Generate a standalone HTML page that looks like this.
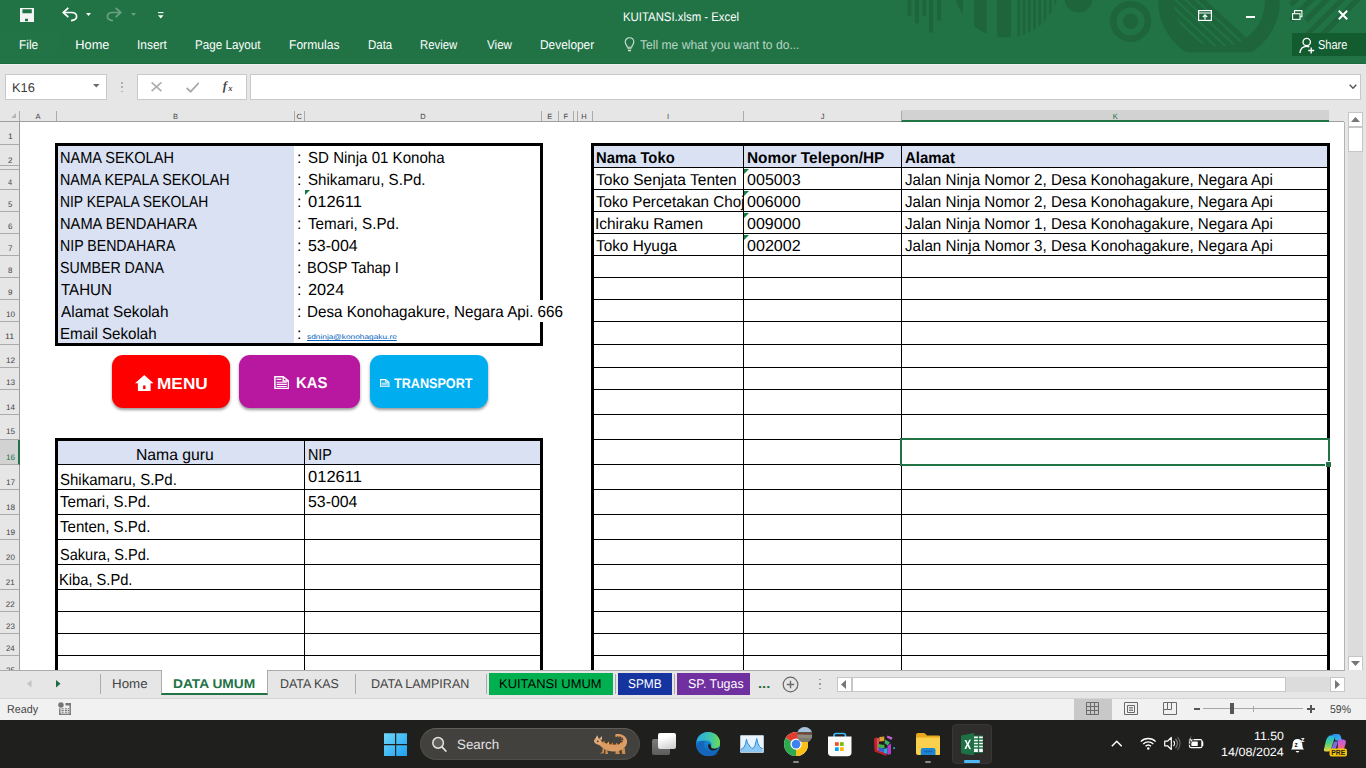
<!DOCTYPE html>
<html lang="id"><head><meta charset="utf-8"><title>KUITANSI.xlsm - Excel</title>
<style>
html,body{margin:0;padding:0;}
body{width:1366px;height:768px;overflow:hidden;background:#fff;font-family:"Liberation Sans",sans-serif;}
#root{position:relative;width:1366px;height:768px;overflow:hidden;background:#fff;}
#root div,#root span.t,#root svg{position:absolute;}
span.t{white-space:pre;display:block;text-rendering:geometricPrecision;transform-origin:0 0;}

</style></head>
<body>
<div id="root">
<div style="left:0px;top:64px;width:1366px;height:58px;background:#e6e6e6;"></div>
<div style="left:0px;top:122px;width:1366px;height:548px;background:#fff;"></div>
<div style="left:58px;top:146px;width:236px;height:197px;background:#d9e1f2;"></div>
<div style="left:58px;top:441px;width:482px;height:23px;background:#d9e1f2;"></div>
<div style="left:594px;top:146px;width:733px;height:21px;background:#d9e1f2;"></div>
<div style="left:594px;top:167px;width:733px;height:1px;background:#000;"></div>
<div style="left:594px;top:189px;width:733px;height:1px;background:#000;"></div>
<div style="left:594px;top:211px;width:733px;height:1px;background:#000;"></div>
<div style="left:594px;top:233px;width:733px;height:1px;background:#000;"></div>
<div style="left:594px;top:255px;width:733px;height:1px;background:#000;"></div>
<div style="left:594px;top:277px;width:733px;height:1px;background:#000;"></div>
<div style="left:594px;top:299px;width:733px;height:1px;background:#000;"></div>
<div style="left:594px;top:321px;width:733px;height:1px;background:#000;"></div>
<div style="left:594px;top:344px;width:733px;height:1px;background:#000;"></div>
<div style="left:594px;top:367px;width:733px;height:1px;background:#000;"></div>
<div style="left:594px;top:389px;width:733px;height:1px;background:#000;"></div>
<div style="left:594px;top:414px;width:733px;height:1px;background:#000;"></div>
<div style="left:594px;top:439px;width:733px;height:1px;background:#000;"></div>
<div style="left:594px;top:464px;width:733px;height:1px;background:#000;"></div>
<div style="left:594px;top:489px;width:733px;height:1px;background:#000;"></div>
<div style="left:594px;top:514px;width:733px;height:1px;background:#000;"></div>
<div style="left:594px;top:539px;width:733px;height:1px;background:#000;"></div>
<div style="left:594px;top:564px;width:733px;height:1px;background:#000;"></div>
<div style="left:594px;top:589px;width:733px;height:1px;background:#000;"></div>
<div style="left:594px;top:611px;width:733px;height:1px;background:#000;"></div>
<div style="left:594px;top:633px;width:733px;height:1px;background:#000;"></div>
<div style="left:594px;top:655px;width:733px;height:1px;background:#000;"></div>
<div style="left:743px;top:146px;width:1px;height:524px;background:#000;"></div>
<div style="left:901px;top:146px;width:1px;height:524px;background:#000;"></div>
<div style="left:591px;top:143px;width:739px;height:3px;background:#000;"></div>
<div style="left:591px;top:143px;width:3px;height:527px;background:#000;"></div>
<div style="left:1327px;top:143px;width:3px;height:527px;background:#000;"></div>
<div style="left:55px;top:143px;width:488px;height:3px;background:#000;"></div>
<div style="left:55px;top:143px;width:3px;height:203px;background:#000;"></div>
<div style="left:55px;top:343px;width:488px;height:3px;background:#000;"></div>
<div style="left:540px;top:143px;width:3px;height:157px;background:#000;"></div>
<div style="left:540px;top:322px;width:3px;height:24px;background:#000;"></div>
<div style="left:55px;top:438px;width:488px;height:3px;background:#000;"></div>
<div style="left:55px;top:438px;width:3px;height:232px;background:#000;"></div>
<div style="left:540px;top:438px;width:3px;height:232px;background:#000;"></div>
<div style="left:58px;top:464px;width:482px;height:1px;background:#000;"></div>
<div style="left:58px;top:489px;width:482px;height:1px;background:#000;"></div>
<div style="left:58px;top:514px;width:482px;height:1px;background:#000;"></div>
<div style="left:58px;top:539px;width:482px;height:1px;background:#000;"></div>
<div style="left:58px;top:564px;width:482px;height:1px;background:#000;"></div>
<div style="left:58px;top:589px;width:482px;height:1px;background:#000;"></div>
<div style="left:58px;top:611px;width:482px;height:1px;background:#000;"></div>
<div style="left:58px;top:633px;width:482px;height:1px;background:#000;"></div>
<div style="left:58px;top:655px;width:482px;height:1px;background:#000;"></div>
<div style="left:304px;top:441px;width:1px;height:229px;background:#000;"></div>
<span class="t" style="left:59.81px;top:151px;font-size:16px;line-height:16px;color:#000;transform:scaleX(0.9083);">NAMA SEKOLAH</span>
<span class="t" style="left:59.83px;top:173px;font-size:16px;line-height:16px;color:#000;transform:scaleX(0.8929);">NAMA KEPALA SEKOLAH</span>
<span class="t" style="left:59.86px;top:195px;font-size:16px;line-height:16px;color:#000;transform:scaleX(0.8667);">NIP KEPALA SEKOLAH</span>
<span class="t" style="left:59.80px;top:217px;font-size:16px;line-height:16px;color:#000;transform:scaleX(0.9167);">NAMA BENDAHARA</span>
<span class="t" style="left:59.84px;top:239px;font-size:16px;line-height:16px;color:#000;transform:scaleX(0.8844);">NIP BENDAHARA</span>
<span class="t" style="left:60.36px;top:261px;font-size:16px;line-height:16px;color:#000;transform:scaleX(0.8860);">SUMBER DANA</span>
<span class="t" style="left:60.66px;top:283px;font-size:16px;line-height:16px;color:#000;transform:scaleX(0.9434);">TAHUN</span>
<span class="t" style="left:60.97px;top:305px;font-size:16px;line-height:16px;color:#000;transform:scaleX(0.9586);">Alamat Sekolah</span>
<span class="t" style="left:59.76px;top:327px;font-size:16px;line-height:16px;color:#000;transform:scaleX(0.9447);">Email Sekolah</span>
<span class="t" style="left:296.94px;top:151px;font-size:16px;line-height:16px;color:#000;">:</span>
<span class="t" style="left:296.94px;top:173px;font-size:16px;line-height:16px;color:#000;">:</span>
<span class="t" style="left:296.94px;top:195px;font-size:16px;line-height:16px;color:#000;">:</span>
<span class="t" style="left:296.94px;top:217px;font-size:16px;line-height:16px;color:#000;">:</span>
<span class="t" style="left:296.94px;top:239px;font-size:16px;line-height:16px;color:#000;">:</span>
<span class="t" style="left:296.94px;top:261px;font-size:16px;line-height:16px;color:#000;">:</span>
<span class="t" style="left:296.94px;top:283px;font-size:16px;line-height:16px;color:#000;">:</span>
<span class="t" style="left:296.94px;top:305px;font-size:16px;line-height:16px;color:#000;">:</span>
<span class="t" style="left:296.94px;top:327px;font-size:16px;line-height:16px;color:#000;">:</span>
<span class="t" style="left:307.82px;top:151px;font-size:16px;line-height:16px;color:#000;transform:scaleX(0.9421);">SD Ninja 01 Konoha</span>
<span class="t" style="left:307.81px;top:173px;font-size:16px;line-height:16px;color:#000;transform:scaleX(0.9443);">Shikamaru, S.Pd.</span>
<span class="t" style="left:307.85px;top:195px;font-size:16px;line-height:16px;color:#000;transform:scaleX(1.0335);">012611</span>
<span class="t" style="left:308.16px;top:217px;font-size:16px;line-height:16px;color:#000;transform:scaleX(0.9500);">Temari, S.Pd.</span>
<span class="t" style="left:307.86px;top:239px;font-size:16px;line-height:16px;color:#000;transform:scaleX(0.9957);">53-004</span>
<span class="t" style="left:307.30px;top:261px;font-size:16px;line-height:16px;color:#000;transform:scaleX(0.9107);">BOSP Tahap I</span>
<span class="t" style="left:307.68px;top:283px;font-size:16px;line-height:16px;color:#000;transform:scaleX(1.0169);">2024</span>
<span class="t" style="left:307.25px;top:305px;font-size:16px;line-height:16px;color:#000;transform:scaleX(0.9497);">Desa Konohagakure, Negara Api. 666</span>
<span class="t" style="left:306.87px;top:335px;font-size:6.8px;line-height:6.8px;color:#0563c1;transform:scaleX(1.2233);text-decoration:underline;">sdninja@konohagaku.re</span>
<span class="t" style="left:595.81px;top:151px;font-size:15.8px;line-height:15.8px;color:#000;font-weight:700;transform:scaleX(0.9368);">Nama Toko</span>
<span class="t" style="left:746.57px;top:151px;font-size:15.8px;line-height:15.8px;color:#000;font-weight:700;transform:scaleX(0.9741);">Nomor Telepon/HP</span>
<span class="t" style="left:904.93px;top:151px;font-size:15.8px;line-height:15.8px;color:#000;font-weight:700;transform:scaleX(0.9465);">Alamat</span>
<span class="t" style="left:596.45px;top:173px;font-size:15.8px;line-height:15.8px;color:#000;transform:scaleX(0.9847);">Toko Senjata Tenten</span>
<span class="t" style="left:747.17px;top:173px;font-size:15.8px;line-height:15.8px;color:#000;transform:scaleX(1.0175);">005003</span>
<span class="t" style="left:905.06px;top:173px;font-size:15.8px;line-height:15.8px;color:#000;transform:scaleX(0.9610);">Jalan Ninja Nomor 2, Desa Konohagakure, Negara Api</span>
<svg style="left:744px;top:168.5px" width="5" height="5"><path d="M0 0H5L0 5Z" fill="#107c41"/></svg>
<div style="left:594px;top:190px;width:149px;height:21px;overflow:hidden;">
<span class="t" style="left:2.46px;top:5px;font-size:15.8px;line-height:15.8px;color:#000;transform:scaleX(0.9608);">Toko Percetakan Choji</span>
</div>
<span class="t" style="left:747.17px;top:195px;font-size:15.8px;line-height:15.8px;color:#000;transform:scaleX(1.0160);">006000</span>
<span class="t" style="left:905.06px;top:195px;font-size:15.8px;line-height:15.8px;color:#000;transform:scaleX(0.9610);">Jalan Ninja Nomor 2, Desa Konohagakure, Negara Api</span>
<svg style="left:744px;top:190.5px" width="5" height="5"><path d="M0 0H5L0 5Z" fill="#107c41"/></svg>
<span class="t" style="left:595.38px;top:217px;font-size:15.8px;line-height:15.8px;color:#000;transform:scaleX(0.9765);">Ichiraku Ramen</span>
<span class="t" style="left:747.17px;top:217px;font-size:15.8px;line-height:15.8px;color:#000;transform:scaleX(1.0160);">009000</span>
<span class="t" style="left:905.06px;top:217px;font-size:15.8px;line-height:15.8px;color:#000;transform:scaleX(0.9610);">Jalan Ninja Nomor 1, Desa Konohagakure, Negara Api</span>
<svg style="left:744px;top:212.5px" width="5" height="5"><path d="M0 0H5L0 5Z" fill="#107c41"/></svg>
<span class="t" style="left:596.46px;top:239px;font-size:15.8px;line-height:15.8px;color:#000;transform:scaleX(0.9703);">Toko Hyuga</span>
<span class="t" style="left:747.17px;top:239px;font-size:15.8px;line-height:15.8px;color:#000;transform:scaleX(1.0195);">002002</span>
<span class="t" style="left:905.06px;top:239px;font-size:15.8px;line-height:15.8px;color:#000;transform:scaleX(0.9610);">Jalan Ninja Nomor 3, Desa Konohagakure, Negara Api</span>
<svg style="left:744px;top:234.5px" width="5" height="5"><path d="M0 0H5L0 5Z" fill="#107c41"/></svg>
<svg style="left:305px;top:190px" width="5" height="5"><path d="M0 0H5L0 5Z" fill="#107c41"/></svg>
<span class="t" style="left:135.76px;top:448px;font-size:16px;line-height:16px;color:#000;transform:scaleX(0.9834);">Nama guru</span>
<span class="t" style="left:307.82px;top:448px;font-size:16px;line-height:16px;color:#000;transform:scaleX(0.8974);">NIP</span>
<span class="t" style="left:59.92px;top:473px;font-size:16px;line-height:16px;color:#000;transform:scaleX(0.9386);">Shikamaru, S.Pd.</span>
<span class="t" style="left:60.26px;top:495px;font-size:16px;line-height:16px;color:#000;transform:scaleX(0.9415);">Temari, S.Pd.</span>
<span class="t" style="left:60.26px;top:520px;font-size:16px;line-height:16px;color:#000;transform:scaleX(0.9412);">Tenten, S.Pd.</span>
<span class="t" style="left:59.94px;top:548px;font-size:16px;line-height:16px;color:#000;transform:scaleX(0.9106);">Sakura, S.Pd.</span>
<span class="t" style="left:59.40px;top:573px;font-size:16px;line-height:16px;color:#000;transform:scaleX(0.9175);">Kiba, S.Pd.</span>
<span class="t" style="left:308.05px;top:470px;font-size:16px;line-height:16px;color:#000;transform:scaleX(1.0335);">012611</span>
<span class="t" style="left:308.06px;top:495px;font-size:16px;line-height:16px;color:#000;transform:scaleX(0.9916);">53-004</span>
<div style="left:0px;top:0px;width:1366px;height:64px;background:#217346;"></div>
<svg style="left:880px;top:0px" width="486" height="64" viewBox="880 0 486 64"><defs><clipPath id="big"><circle cx="1006.4" cy="-15.4" r="52.8"/></clipPath><clipPath id="hole"><circle cx="1219.3" cy="1" r="45.6"/></clipPath><clipPath id="c52"><rect x="880" y="0" width="486" height="52.2"/></clipPath></defs><rect x="907.6" y="0" width="3.8" height="16.2" fill="#1e653c"/><rect x="915" y="0" width="4.0" height="23.4" fill="#1e653c"/><rect x="922.5" y="0" width="3.5" height="16.2" fill="#1e653c"/><rect x="929" y="0" width="4.0" height="32.5" fill="#1e653c"/><rect x="937" y="0" width="4.0" height="20.7" fill="#1e653c"/><g clip-path="url(#big)" fill="#1e653c"><rect x="950" y="0" width="12.9" height="40"/><rect x="974" y="0" width="12.6" height="40"/><rect x="997.2" y="0" width="13.7" height="40"/><rect x="1017.4" y="0" width="2.6" height="40"/><rect x="1022.7" y="0" width="2.6" height="40"/><rect x="1027.9" y="0" width="2.6" height="40"/><rect x="1033.2" y="0" width="2.6" height="40"/><rect x="1038.5" y="0" width="2.6" height="40"/><rect x="1043.8" y="0" width="2.6" height="40"/><rect x="1049.0" y="0" width="2.6" height="40"/><rect x="1054.3" y="0" width="2.6" height="40"/><rect x="1059.6" y="0" width="2.6" height="40"/></g><circle cx="1078.5" cy="-1.2" r="13.8" fill="#1e653c"/><circle cx="1130.6" cy="21.3" r="20.6" fill="#1e653c"/><circle cx="1130.6" cy="21.3" r="13.9" fill="#217346"/><circle cx="1130.6" cy="21.3" r="7.7" fill="#1e653c"/><g clip-path="url(#c52)"><circle cx="1219" cy="1" r="60.8" fill="#1e653c"/></g><g clip-path="url(#hole)" fill="#217346"><path d="M1205.4 0L1270.2 60H1300V0Z"/><path d="M1194.5 0L1259.3 60H1262.6L1197.8 0Z"/><path d="M1184 0L1248.8 60H1252.1L1187.3 0Z"/><path d="M1174 0L1238.8 60H1242.1L1177.3 0Z"/><path d="M1164 0L1228.8 60H1232.1L1167.3 0Z"/><path d="M1154 0L1218.8 60H1222.1L1157.3 0Z"/></g><path d="M1291.8 0H1299.5L1292.5 7.0L1288.7 3.1Z" fill="#1e653c"/><path d="M1307.2 0H1315L1292.8 22.2L1288.8 18.4Z" fill="#1e653c"/><path d="M1322.7 0H1330.4L1308.1 22.3L1304.2 18.5Z" fill="#1e653c"/><path d="M1338.2 0H1345.2L1311.2 34H1304.2Z" fill="#1e653c"/><path d="M1353 0H1361L1327 34H1319Z" fill="#1e653c"/></svg>
<div style="left:0px;top:32px;width:58px;height:23px;background:#227447;"></div>
<svg style="left:20px;top:8px" width="14" height="14.200" viewBox="0 0 14 14.2"><path fill-rule="evenodd" d="M0 0H14V14.200H0ZM2.400 1.300V5.200H11.800V1.300ZM5 10.700V13.300H8V10.700Z" fill="#f4f4f4"/></svg>
<svg style="left:62px;top:7px" width="16" height="15" viewBox="0 0 16 15"><path d="M1.300 5.500H9.500Q14.600 5.500 14.600 9.500Q14.600 13 9 13.600" fill="none" stroke="#fff" stroke-width="1.700"/><path d="M6.300 .8L1.200 5.500L6.300 10.200" fill="none" stroke="#fff" stroke-width="1.800"/></svg>
<svg style="left:86.200px;top:13px" width="5" height="3.200"><path d="M0 0H5L2.500 3Z" fill="#fff"/></svg>
<svg style="left:106px;top:7px" width="16" height="15" viewBox="0 0 16 15" opacity=".33"><g transform="translate(16,0) scale(-1,1)"><path d="M1.300 5.500H9.500Q14.600 5.500 14.600 9.500Q14.600 13 9 13.600" fill="none" stroke="#fff" stroke-width="1.700"/><path d="M6.300 .8L1.200 5.500L6.300 10.200" fill="none" stroke="#fff" stroke-width="1.800"/></g></svg>
<svg style="left:130.500px;top:13px" width="5" height="3.200" opacity=".33"><path d="M0 0H5L2.500 3Z" fill="#fff"/></svg>
<svg style="left:158px;top:11.500px" width="6" height="7" viewBox="0 0 6 7"><path d="M0 .6H5.500" stroke="#fff" stroke-width="1.100"/><path d="M0 3.200H5.500L2.750 6.500Z" fill="#fff"/></svg>
<svg style="left:1197.500px;top:9.500px" width="14" height="11" viewBox="0 0 14 11"><rect x=".6" y=".6" width="12.800" height="9.800" fill="#1a6338" stroke="#fff" stroke-width="1.200"/><path d="M.6 3H13.400" stroke="#fff" stroke-width="1"/><path d="M7 9.500V5M4.800 7L7 4.800L9.200 7" fill="none" stroke="#fff" stroke-width="1.200"/></svg>
<div style="left:1246px;top:16px;width:9px;height:2px;background:#fff;"></div>
<svg style="left:1292px;top:10px" width="10.500" height="10" viewBox="0 0 10.5 10"><path d="M2.500 3.500V.6H9.900V6.800H8" fill="none" stroke="#fff" stroke-width="1.100"/><rect x=".6" y="3.700" width="7.400" height="5.700" fill="#1a6338" stroke="#fff" stroke-width="1.100"/></svg>
<svg style="left:1338px;top:10px" width="10" height="10" viewBox="0 0 10 10"><path d="M.8 .8L9.200 9.200M9.200 .8L.8 9.200" stroke="#fff" stroke-width="2"/></svg>
<svg style="left:623.500px;top:37px" width="11" height="15" viewBox="0 0 11 15"><path d="M3.300 10.200C3.300 8.500 1.200 7.600 1.200 5C1.200 2.600 3 .8 5.500 .8C8 .8 9.800 2.600 9.800 5C9.800 7.600 7.700 8.500 7.700 10.200Z" fill="none" stroke="#cfe3d6" stroke-width="1.100"/><path d="M3.500 11.800H7.500M4 13.600H7" stroke="#cfe3d6" stroke-width="1.100"/></svg>
<span class="t" style="left:623.37px;top:11px;font-size:12.5px;line-height:12.5px;color:#fff;transform:scaleX(0.9101);">KUITANSI.xlsm - Excel</span>
<span class="t" style="left:19.42px;top:39px;font-size:12.8px;line-height:12.8px;color:#fff;transform:scaleX(0.9315);">File</span>
<span class="t" style="left:75.35px;top:39px;font-size:12.8px;line-height:12.8px;color:#fff;">Home</span>
<span class="t" style="left:137.00px;top:39px;font-size:12.8px;line-height:12.8px;color:#fff;transform:scaleX(0.9339);">Insert</span>
<span class="t" style="left:195.44px;top:39px;font-size:12.8px;line-height:12.8px;color:#fff;transform:scaleX(0.9106);">Page Layout</span>
<span class="t" style="left:289.21px;top:39px;font-size:12.8px;line-height:12.8px;color:#fff;transform:scaleX(0.9456);">Formulas</span>
<span class="t" style="left:367.56px;top:39px;font-size:12.8px;line-height:12.8px;color:#fff;transform:scaleX(0.8968);">Data</span>
<span class="t" style="left:420.47px;top:39px;font-size:12.8px;line-height:12.8px;color:#fff;transform:scaleX(0.8891);">Review</span>
<span class="t" style="left:486.95px;top:39px;font-size:12.8px;line-height:12.8px;color:#fff;transform:scaleX(0.9097);">View</span>
<span class="t" style="left:540.22px;top:39px;font-size:12.8px;line-height:12.8px;color:#fff;transform:scaleX(0.9287);">Developer</span>
<span class="t" style="left:640.13px;top:39px;font-size:12.6px;line-height:12.6px;color:#b9d5c4;transform:scaleX(0.9613);">Tell me what you want to do...</span>
<div style="left:1292px;top:33px;width:74px;height:23px;background:#125c30;"></div>
<svg style="left:1298.500px;top:36.500px" width="16" height="17" viewBox="0 0 16 17"><circle cx="7.700" cy="5" r="3.700" fill="none" stroke="#fff" stroke-width="1.300"/><path d="M.9 16C1.400 11.500 4 9.300 7.500 9.300C8.600 9.300 9.500 9.500 10.300 9.900" fill="none" stroke="#fff" stroke-width="1.300"/><path d="M12.200 10.500V16.500M9.200 13.500H15.200" stroke="#fff" stroke-width="1.300"/></svg>
<span class="t" style="left:1317.80px;top:39px;font-size:12.8px;line-height:12.8px;color:#fff;transform:scaleX(0.8607);">Share</span>
<div style="left:0px;top:63px;width:1366px;height:1px;background:#1c6a3d;"></div>
<div style="left:0px;top:64px;width:1366px;height:1px;background:#efefef;"></div>
<div style="left:5px;top:74px;width:102px;height:26px;background:#fff;box-sizing:border-box;border:1px solid #c8c8c8;"></div>
<span class="t" style="left:11.64px;top:82px;font-size:12.8px;line-height:12.8px;color:#3b3b3b;transform:scaleX(1.0068);">K16</span>
<div style="left:137px;top:74px;width:110px;height:26px;background:#fff;box-sizing:border-box;border:1px solid #c8c8c8;"></div>
<div style="left:250px;top:74px;width:1111px;height:26px;background:#fff;box-sizing:border-box;border:1px solid #c8c8c8;"></div>
<div style="left:0px;top:121px;width:1366px;height:1px;background:#9e9e9e;"></div>
<div style="left:19px;top:122px;width:1px;height:548px;background:#9e9e9e;"></div>
<div style="left:901px;top:110px;width:428px;height:11px;background:#d2d2d2;"></div>
<div style="left:901px;top:120px;width:428px;height:2px;background:#217346;"></div>
<div style="left:56px;top:111px;width:1px;height:10px;background:#ababab;"></div>
<span class="t" style="left:35.50px;top:113px;font-size:7.5px;line-height:7.5px;color:#444;">A</span>
<div style="left:294px;top:111px;width:1px;height:10px;background:#ababab;"></div>
<span class="t" style="left:172.89px;top:113px;font-size:7.5px;line-height:7.5px;color:#444;">B</span>
<div style="left:304px;top:111px;width:1px;height:10px;background:#ababab;"></div>
<span class="t" style="left:296.62px;top:113px;font-size:7.5px;line-height:7.5px;color:#444;">C</span>
<div style="left:541px;top:111px;width:1px;height:10px;background:#ababab;"></div>
<span class="t" style="left:420.16px;top:113px;font-size:7.5px;line-height:7.5px;color:#444;">D</span>
<div style="left:558px;top:111px;width:1px;height:10px;background:#ababab;"></div>
<span class="t" style="left:547.35px;top:113px;font-size:7.5px;line-height:7.5px;color:#444;">E</span>
<div style="left:573px;top:111px;width:1px;height:10px;background:#ababab;"></div>
<span class="t" style="left:563.55px;top:113px;font-size:7.5px;line-height:7.5px;color:#444;">F</span>
<div style="left:592px;top:111px;width:1px;height:10px;background:#ababab;"></div>
<span class="t" style="left:581.29px;top:113px;font-size:7.5px;line-height:7.5px;color:#444;">H</span>
<div style="left:743px;top:111px;width:1px;height:10px;background:#ababab;"></div>
<span class="t" style="left:666.96px;top:113px;font-size:7.5px;line-height:7.5px;color:#444;">I</span>
<div style="left:901px;top:111px;width:1px;height:10px;background:#ababab;"></div>
<span class="t" style="left:820.84px;top:113px;font-size:7.5px;line-height:7.5px;color:#444;">J</span>
<div style="left:1329px;top:111px;width:1px;height:10px;background:#ababab;"></div>
<span class="t" style="left:1112.73px;top:113px;font-size:7.5px;line-height:7.5px;color:#217346;">K</span>
<div style="left:19px;top:111px;width:1px;height:10px;background:#ababab;"></div>
<div style="left:577px;top:111px;width:1px;height:10px;background:#ababab;"></div>
<svg style="left:11px;top:113px" width="6" height="6"><path d="M5 0V5H0Z" fill="#b7b7b7"/></svg>
<div style="left:0px;top:122px;width:19px;height:548px;background:#e6e6e6;"></div>
<div style="left:0px;top:440px;width:19px;height:24px;background:#d2d2d2;"></div>
<div style="left:18px;top:440px;width:2px;height:25px;background:#217346;"></div>
<div style="left:0px;top:144px;width:19px;height:1px;background:#ababab;"></div>
<span class="t" style="left:7.70px;top:133px;font-size:8px;line-height:8px;color:#444;transform:scaleX(1.0727);">1</span>
<div style="left:0px;top:165px;width:19px;height:1px;background:#ababab;"></div>
<span class="t" style="left:7.94px;top:157px;font-size:8px;line-height:8px;color:#444;transform:scaleX(1.0152);">2</span>
<div style="left:0px;top:189px;width:19px;height:1px;background:#ababab;"></div>
<span class="t" style="left:8.18px;top:179px;font-size:8px;line-height:8px;color:#444;transform:scaleX(0.9178);">4</span>
<div style="left:0px;top:211px;width:19px;height:1px;background:#ababab;"></div>
<span class="t" style="left:8.04px;top:201px;font-size:8px;line-height:8px;color:#444;transform:scaleX(0.9755);">5</span>
<div style="left:0px;top:233px;width:19px;height:1px;background:#ababab;"></div>
<span class="t" style="left:7.94px;top:223px;font-size:8px;line-height:8px;color:#444;">6</span>
<div style="left:0px;top:255px;width:19px;height:1px;background:#ababab;"></div>
<span class="t" style="left:7.93px;top:245px;font-size:8px;line-height:8px;color:#444;transform:scaleX(1.0174);">7</span>
<div style="left:0px;top:277px;width:19px;height:1px;background:#ababab;"></div>
<span class="t" style="left:8.01px;top:267px;font-size:8px;line-height:8px;color:#444;transform:scaleX(0.9856);">8</span>
<div style="left:0px;top:299px;width:19px;height:1px;background:#ababab;"></div>
<span class="t" style="left:7.97px;top:289px;font-size:8px;line-height:8px;color:#444;">9</span>
<div style="left:0px;top:321px;width:19px;height:1px;background:#ababab;"></div>
<span class="t" style="left:5.53px;top:311px;font-size:8px;line-height:8px;color:#444;transform:scaleX(1.0155);">10</span>
<div style="left:0px;top:344px;width:19px;height:1px;background:#ababab;"></div>
<span class="t" style="left:5.47px;top:333px;font-size:8px;line-height:8px;color:#444;transform:scaleX(1.1089);">11</span>
<div style="left:0px;top:367px;width:19px;height:1px;background:#ababab;"></div>
<span class="t" style="left:5.52px;top:357px;font-size:8px;line-height:8px;color:#444;transform:scaleX(1.0270);">12</span>
<div style="left:0px;top:389px;width:19px;height:1px;background:#ababab;"></div>
<span class="t" style="left:5.53px;top:379px;font-size:8px;line-height:8px;color:#444;transform:scaleX(1.0205);">13</span>
<div style="left:0px;top:414px;width:19px;height:1px;background:#ababab;"></div>
<span class="t" style="left:5.54px;top:404px;font-size:8px;line-height:8px;color:#444;transform:scaleX(1.0056);">14</span>
<div style="left:0px;top:439px;width:19px;height:1px;background:#ababab;"></div>
<span class="t" style="left:5.53px;top:428px;font-size:8px;line-height:8px;color:#444;transform:scaleX(1.0185);">15</span>
<div style="left:0px;top:464px;width:19px;height:1px;background:#ababab;"></div>
<span class="t" style="left:5.53px;top:454px;font-size:8px;line-height:8px;color:#217346;transform:scaleX(1.0205);">16</span>
<div style="left:0px;top:489px;width:19px;height:1px;background:#ababab;"></div>
<span class="t" style="left:5.52px;top:479px;font-size:8px;line-height:8px;color:#444;transform:scaleX(1.0270);">17</span>
<div style="left:0px;top:514px;width:19px;height:1px;background:#ababab;"></div>
<span class="t" style="left:5.53px;top:504px;font-size:8px;line-height:8px;color:#444;transform:scaleX(1.0200);">18</span>
<div style="left:0px;top:539px;width:19px;height:1px;background:#ababab;"></div>
<span class="t" style="left:5.53px;top:529px;font-size:8px;line-height:8px;color:#444;transform:scaleX(1.0240);">19</span>
<div style="left:0px;top:564px;width:19px;height:1px;background:#ababab;"></div>
<span class="t" style="left:5.75px;top:554px;font-size:8px;line-height:8px;color:#444;transform:scaleX(0.9898);">20</span>
<div style="left:0px;top:589px;width:19px;height:1px;background:#ababab;"></div>
<span class="t" style="left:5.75px;top:579px;font-size:8px;line-height:8px;color:#444;">21</span>
<div style="left:0px;top:611px;width:19px;height:1px;background:#ababab;"></div>
<span class="t" style="left:5.75px;top:601px;font-size:8px;line-height:8px;color:#444;">22</span>
<div style="left:0px;top:633px;width:19px;height:1px;background:#ababab;"></div>
<span class="t" style="left:5.75px;top:623px;font-size:8px;line-height:8px;color:#444;transform:scaleX(0.9945);">23</span>
<div style="left:0px;top:655px;width:19px;height:1px;background:#ababab;"></div>
<span class="t" style="left:5.76px;top:645px;font-size:8px;line-height:8px;color:#444;transform:scaleX(0.9804);">24</span>
<span class="t" style="left:5.75px;top:667px;font-size:8px;line-height:8px;color:#444;transform:scaleX(0.9926);">25</span>
<div style="left:0px;top:169px;width:19px;height:1px;background:#ababab;"></div>
<div style="left:900px;top:438px;width:430px;height:28px;background:#fff;box-sizing:border-box;border:2px solid #217346;"></div>
<div style="left:1325px;top:461px;width:6px;height:6px;background:#fff;"></div>
<div style="left:1326px;top:462px;width:5px;height:5px;background:#217346;"></div>
<div style="left:1344px;top:110px;width:22px;height:560px;background:#e6e6e6;"></div>
<div style="left:1329px;top:110px;width:15px;height:11px;background:#e6e6e6;"></div>
<div style="left:1344px;top:122px;width:1px;height:548px;background:#b4b4b4;"></div>
<div style="left:1348px;top:127px;width:15px;height:530px;background:#dcdcdc;"></div>
<div style="left:1348px;top:112px;width:15px;height:15px;background:#fff;box-sizing:border-box;border:1px solid #c6c6c6;"></div>
<svg style="left:1351px;top:117px" width="9" height="5"><path d="M0 5L4.5 0L9 5Z" fill="#777"/></svg>
<div style="left:1348px;top:127px;width:15px;height:25px;background:#fff;box-sizing:border-box;border:1px solid #c6c6c6;"></div>
<div style="left:1348px;top:656px;width:15px;height:15px;background:#fff;box-sizing:border-box;border:1px solid #c6c6c6;"></div>
<svg style="left:1351px;top:661px" width="9" height="5"><path d="M0 0L4.5 5L9 0Z" fill="#777"/></svg>
<div style="left:0px;top:670px;width:1366px;height:28px;background:#e6e6e6;"></div>
<div style="left:0px;top:670px;width:1345px;height:1px;background:#ababab;"></div>
<div style="left:0px;top:698px;width:1366px;height:22px;background:#f1f1f1;"></div>
<div style="left:0px;top:698px;width:1366px;height:1px;background:#d4d4d4;"></div>
<svg style="left:27px;top:680px" width="5" height="8"><path d="M4.5 0V7.5L0 3.75Z" fill="#c3c3c3"/></svg>
<svg style="left:55.5px;top:680px" width="5" height="8"><path d="M0 0V7.5L4.5 3.75Z" fill="#1e6b41"/></svg>
<div style="left:100px;top:674px;width:1px;height:20px;background:#ababab;"></div>
<div style="left:355px;top:674px;width:1px;height:20px;background:#ababab;"></div>
<div style="left:486px;top:674px;width:1px;height:20px;background:#ababab;"></div>
<div style="left:615px;top:674px;width:1px;height:20px;background:#ababab;"></div>
<div style="left:674px;top:674px;width:1px;height:20px;background:#ababab;"></div>
<div style="left:161px;top:670px;width:107px;height:25px;background:#fff;box-sizing:border-box;border:1px solid #ababab;border-top:0;border-bottom:2px solid #217346;"></div>
<span class="t" style="left:112.21px;top:678px;font-size:12.8px;line-height:12.8px;color:#444;transform:scaleX(1.0425);">Home</span>
<span class="t" style="left:172.88px;top:678px;font-size:12.8px;line-height:12.8px;color:#217346;font-weight:700;transform:scaleX(1.0732);">DATA UMUM</span>
<span class="t" style="left:280.48px;top:678px;font-size:12.8px;line-height:12.8px;color:#444;transform:scaleX(0.9707);">DATA KAS</span>
<span class="t" style="left:370.67px;top:678px;font-size:12.8px;line-height:12.8px;color:#444;transform:scaleX(0.9777);">DATA LAMPIRAN</span>
<div style="left:489px;top:673px;width:124px;height:21.6px;background:#00b050;"></div>
<span class="t" style="left:498.94px;top:678px;font-size:12.8px;line-height:12.8px;color:#000;transform:scaleX(1.0108);">KUITANSI UMUM</span>
<div style="left:618px;top:673px;width:54px;height:21.6px;background:#1634a0;"></div>
<span class="t" style="left:627.76px;top:678px;font-size:12.8px;line-height:12.8px;color:#fff;transform:scaleX(0.9283);">SPMB</span>
<div style="left:677px;top:673px;width:73px;height:21.6px;background:#7030a0;"></div>
<span class="t" style="left:688.04px;top:678px;font-size:12.8px;line-height:12.8px;color:#fff;transform:scaleX(0.9686);">SP. Tugas</span>
<span class="t" style="left:758.00px;top:677px;font-size:13px;line-height:13px;color:#1e6b41;font-weight:700;transform:scaleX(1.1371);">...</span>
<svg style="left:782px;top:675.5px" width="17" height="17" viewBox="0 0 17 17"><circle cx="8.5" cy="8.5" r="7.3" fill="none" stroke="#6a6a6a" stroke-width="1.2"/><path d="M8.5 4.8V12.2M4.8 8.5H12.2" stroke="#6a6a6a" stroke-width="1.4"/></svg>
<div style="left:819.3px;top:678.8px;width:1.7px;height:1.7px;background:#9a9a9a;"></div>
<div style="left:819.3px;top:683.3px;width:1.7px;height:1.7px;background:#9a9a9a;"></div>
<div style="left:819.3px;top:687.8px;width:1.7px;height:1.7px;background:#9a9a9a;"></div>
<div style="left:837px;top:677px;width:508px;height:14.5px;background:#dcdcdc;"></div>
<div style="left:836.5px;top:677px;width:15px;height:14.5px;background:#fff;box-sizing:border-box;border:1px solid #c6c6c6;"></div>
<svg style="left:841px;top:680px" width="5" height="9"><path d="M5 0V9L0 4.5Z" fill="#777"/></svg>
<div style="left:851.5px;top:677px;width:434.5px;height:14.5px;background:#fff;box-sizing:border-box;border:1px solid #c6c6c6;"></div>
<div style="left:1330px;top:677px;width:15px;height:14.5px;background:#fff;box-sizing:border-box;border:1px solid #c6c6c6;"></div>
<svg style="left:1335px;top:680px" width="5" height="9"><path d="M0 0V9L5 4.5Z" fill="#777"/></svg>
<span class="t" style="left:6.92px;top:705px;font-size:11.3px;line-height:11.3px;color:#444;transform:scaleX(0.9493);">Ready</span>
<svg style="left:58px;top:702px" width="14" height="13.500" viewBox="0 0 14 13.5"><g fill="#767676"><circle cx="2.950" cy="2.950" r="2.750"/><rect x="7.500" y="1" width="5.400" height="2.500"/><rect x="11.500" y="1" width="1.400" height="12"/><rect x="1.100" y="6.400" width="1.400" height="6.500"/><rect x="1.100" y="11.600" width="11.800" height="1.300"/><rect x="3.500" y="6.300" width="2.200" height="1"/><rect x="6.800" y="6.300" width="2.200" height="1"/><rect x="9.700" y="6.300" width="1.500" height="1"/><rect x="3.500" y="8" width="2.200" height="1"/><rect x="6.800" y="8" width="2.200" height="1"/><rect x="9.700" y="8" width="1.500" height="1"/><rect x="3.500" y="9.700" width="2.200" height="1"/><rect x="6.800" y="9.700" width="2.200" height="1"/><rect x="9.700" y="9.700" width="1.500" height="1"/></g></svg>
<div style="left:1074px;top:699px;width:38px;height:21px;background:#c8c8c8;"></div>
<svg style="left:1086px;top:702px" width="13" height="13" viewBox="0 0 13 13"><path d="M0.5 0.5H12.5V12.5H0.5ZM0.5 4.5H12.5M0.5 8.5H12.5M4.5 0.5V12.5M8.5 0.5V12.5" fill="none" stroke="#6a6a6a" stroke-width="1"/></svg>
<svg style="left:1124px;top:702px" width="14" height="13" viewBox="0 0 14 13"><path d="M0.5 0.5H13.5V12.5H0.5Z" fill="none" stroke="#6a6a6a" stroke-width="1"/><path d="M3.5 3.5H10.5V10.5H3.5Z" fill="none" stroke="#6a6a6a" stroke-width="1"/><path d="M5 5.5H9M5 7H9M5 8.5H9" stroke="#6a6a6a" stroke-width="0.8"/></svg>
<svg style="left:1162.5px;top:702px" width="14" height="13" viewBox="0 0 14 13"><path d="M0.5 0.5H13.5V12.5H0.5Z" fill="none" stroke="#6a6a6a" stroke-width="1"/><path d="M4.5 0.5V7.5H8.5V0.5M0.5 7.5H4.5" fill="none" stroke="#6a6a6a" stroke-width="1"/></svg>
<div style="left:1193.5px;top:707.7px;width:6px;height:2px;background:#555;"></div>
<div style="left:1203px;top:708.3px;width:100px;height:1px;background:#a6a6a6;"></div>
<div style="left:1253px;top:706px;width:1px;height:6px;background:#a6a6a6;"></div>
<div style="left:1230.3px;top:702.8px;width:3.8px;height:11px;background:#555;"></div>
<div style="left:1307px;top:707.7px;width:8px;height:2px;background:#555;"></div>
<div style="left:1310px;top:704.7px;width:2px;height:8px;background:#555;"></div>
<span class="t" style="left:1330.28px;top:705px;font-size:11.3px;line-height:11.3px;color:#444;transform:scaleX(0.9285);">59%</span>
<div style="left:0px;top:720px;width:1366px;height:48px;background:#1f1f1e;"></div>
<div style="left:112px;top:355px;width:118px;height:52.5px;background:#ff0000;box-shadow:0 2px 3px rgba(0,0,0,.4);border-radius:11px;"></div>
<div style="left:239px;top:355px;width:121px;height:52.5px;background:#b8179f;box-shadow:0 2px 3px rgba(0,0,0,.4);border-radius:11px;"></div>
<div style="left:370px;top:355px;width:118px;height:52.5px;background:#00aeef;box-shadow:0 2px 3px rgba(0,0,0,.4);border-radius:11px;"></div>
<svg style="left:135px;top:375px" width="18.5" height="16" viewBox="0 0 18.5 16"><path d="M9.25 0L18.5 8.2H15.6V16H2.9V8.2H0Z" fill="#fff"/><rect x="8.1" y="10.5" width="2.4" height="3.6" fill="#ff0000"/></svg>
<span class="t" style="left:157.25px;top:377px;font-size:16px;line-height:16px;color:#fff;font-weight:700;transform:scaleX(1.0785);">MENU</span>
<svg style="left:273.9px;top:375.7px" width="15.4" height="13.2" viewBox="0 0 15.4 13.2"><path d="M0.9 0.7H9.2L14.5 5V12.5H0.9Z" fill="none" stroke="#fff" stroke-width="1.5"/><path d="M9.2 0.7V5H14.5" fill="none" stroke="#fff" stroke-width="1.3"/><path d="M2.6 3.4H7.4M2.6 6.3H12.8M2.6 8.4H12.8M2.6 10.5H12.8" stroke="#fff" stroke-width="1.1"/></svg>
<span class="t" style="left:295.81px;top:376px;font-size:15.8px;line-height:15.8px;color:#fff;font-weight:700;transform:scaleX(0.9376);">KAS</span>
<svg style="left:380.2px;top:379.2px" width="9.5" height="8.3" viewBox="0 0 9.5 8.3"><path d="M0.6 0.6H5.6L8.9 3.2V7.7H0.6Z" fill="none" stroke="#fff" stroke-width="1.1"/><path d="M5.6 0.6V3.2H8.9" fill="none" stroke="#fff" stroke-width="0.9"/><path d="M1.6 4.2H7.9M1.6 5.9H7.9" stroke="#fff" stroke-width="0.9"/></svg>
<span class="t" style="left:394.36px;top:377px;font-size:13.8px;line-height:13.8px;color:#fff;font-weight:700;transform:scaleX(0.9142);">TRANSPORT</span>
<svg style="left:384px;top:732.8px" width="23.3" height="23.2" viewBox="0 0 23.8 23.4"><defs><linearGradient id="wg" x1="0" y1="0" x2="1" y2="1"><stop offset="0" stop-color="#6fd8fb"/><stop offset="1" stop-color="#1d9ff0"/></linearGradient></defs><path d="M0 0H11.3V11.1H0ZM12.5 0H23.8V11.1H12.5ZM0 12.3H11.3V23.4H0ZM12.5 12.3H23.8V23.4H12.5Z" fill="url(#wg)"/></svg>
<div style="left:420px;top:728px;width:220px;height:32px;background:#43413e;box-sizing:border-box;border-radius:16px;border:1px solid #4f4d4a;border-top-color:#605e5b;"></div>
<svg style="left:431px;top:736px" width="17" height="17" viewBox="0 0 17 17"><circle cx="7.100" cy="6.900" r="5.300" fill="#605e5b" stroke="#e2e2e2" stroke-width="1.500"/><path d="M11 10.800L14.800 15" stroke="#e2e2e2" stroke-width="1.800" stroke-linecap="round"/></svg>
<span class="t" style="left:456.70px;top:738px;font-size:13.6px;line-height:13.6px;color:#e4e4e4;transform:scaleX(0.9791);">Search</span>
<svg style="left:593.8px;top:733.7px" width="33.4" height="20.4" viewBox="0 0 33.4 20.4"><path d="M10.500 14.500L9.800 19.300L5.700 19.600L8.200 18L8.800 13.500ZM13 15.500L14.200 20.200H11.300L11.500 15.500ZM22 16.500L21.200 20.300H25.800L25 16ZM27.500 15L28.300 20.200H31.400L30.800 14Z" fill="#cf8a4e"/><path d="M21.400 .3C26 -.5 31.500 1 33 6C34 11 30 15.500 24.500 17C19 18.300 13.500 17.500 9.500 14.600L3.800 10L7 7.300C10 9 14 10.500 19 10.800C23 11 26.800 10.500 28.800 7.500C30 5 29 3.400 27 2.700C25 2 23 1.900 21.400 2.100Z" fill="#dc9c66"/><ellipse cx="3.700" cy="7.200" rx="3.700" ry="3.100" fill="#e3a873" transform="rotate(28 3.700 7.200)"/><path d="M1.600 4.600L3.100 1.200L4.600 4.500ZM5.500 5L7.700 2L8.100 5.800Z" fill="#ecc094"/><circle cx="3.700" cy="7.300" r=".9" fill="#3a3f4c"/><path d="M8.600 8.300L10.200 6.400L11.200 9.400ZM13 10L14.600 7.400L15.700 10.600ZM17 10.800L18.400 8.300L19.700 11ZM21.300 11L22.800 8.600L24.200 10.900ZM25.500 10.400L27.300 8L27.900 9.500ZM28.600 7.500L27 6.300L29 5.800ZM27.500 3.200L26.600 5L28.600 4.300ZM23.500 1.900L24.300 3.800L25.500 2.200ZM21.500 1.800L21.900 3.300L23 2Z" fill="#e67a30"/><path d="M13 10L14.600 7.400L14.800 10.400ZM25.500 10.400L27.300 8L27 10ZM21.500 1.800L21.900 3.300L23 2Z" fill="#f0c030"/></svg>
<div style="left:652px;top:739px;width:18px;height:15.6px;background:#6d6d6d;border-radius:2px;background:linear-gradient(180deg,#7b7b7b,#5c5c5c);"></div>
<div style="left:658.3px;top:732.6px;width:18px;height:16.4px;background:#fff;border-radius:2px;background:linear-gradient(160deg,#ffffff 30%,#c9c9c9);"></div>
<svg style="left:696px;top:731.9px" width="24.2" height="24.2" viewBox="0 0 24 24"><defs><linearGradient id="e1" x1="0" y1="0" x2="1" y2="0"><stop offset="0" stop-color="#2aa7e6"/><stop offset=".6" stop-color="#3fc6a8"/><stop offset="1" stop-color="#6fdc4c"/></linearGradient><linearGradient id="e2" x1="0" y1="0" x2="0" y2="1"><stop offset="0" stop-color="#1b9de2"/><stop offset="1" stop-color="#0d5fb8"/></linearGradient></defs><circle cx="12" cy="12" r="12" fill="url(#e2)"/><path d="M.6 9C2 3.500 6.500 0 12 0C19 0 24 5 24 11C24 14.500 21.500 16.500 18.500 16.500C15.500 16.500 14.200 15 15 13.600C15.800 12.400 15.500 10 12.500 9C8 7.600 2.500 10 .6 9Z" fill="url(#e1)"/><path d="M8 12C8 17 12 21.500 18 21.500C20 21.500 21.500 21 22.600 20C20.500 22.500 17 24 12 24C5 24 .5 18.500 .3 13C1.500 9.500 6 8 9.500 9.300C8.500 10 8 11 8 12Z" fill="#1565b8"/><path d="M15 13.600C14.300 15 15.500 16.500 18.500 16.500C20 16.500 21.600 16 22.800 14.700C21.500 17.500 18.500 19 15.800 18.300C12.500 17.400 11 14 12.800 11.600C13.200 12 14.500 12.500 15 13.600Z" fill="#1f1e1c"/></svg>
<div style="left:740px;top:734.8px;width:24.3px;height:18.4px;background:#eaf4fc;box-sizing:border-box;border:1.3px solid #b9c4d0;border-radius:1px;"></div>
<svg style="left:741.3px;top:736px" width="21.700" height="16" viewBox="0 0 21.7 16"><path d="M0 14.500L1.500 12L3 11.500L4.500 8L5.500 3L6.500 7L8 9L9.500 11L11 12.500L12.500 12L14 9.500L15 5.500L15.800 2.500L17 7.500L18.500 10.500L20 12L21.700 12.500V16H0Z" fill="#8cc8f2"/><path d="M0 14.500L1.500 12L3 11.500L4.500 8L5.500 3L6.500 7L8 9L9.500 11L11 12.500L12.500 12L14 9.500L15 5.500L15.800 2.500L17 7.500L18.500 10.500L20 12L21.700 12.500" fill="none" stroke="#2f8fe0" stroke-width="1"/></svg>
<svg style="left:783.8px;top:731.9px" width="24.2" height="24.2" viewBox="0 0 24 24"><circle cx="12" cy="12" r="12" fill="#fff"/><path d="M12 12L1.610 6A12 12 0 0 1 22.390 6Z" fill="#e33b2e"/><path d="M12 12L22.390 6A12 12 0 0 1 12 24Z" fill="#fbc116"/><path d="M12 12L12 24A12 12 0 0 1 1.610 6Z" fill="#2da94f"/><circle cx="12" cy="12" r="5.600" fill="#fff"/><circle cx="12" cy="12" r="4.400" fill="#3e82f1"/></svg>
<svg style="left:797.4px;top:726.8px" width="15.400" height="15.400" viewBox="0 0 15.4 15.4"><defs><clipPath id="pc"><circle cx="7.700" cy="7.700" r="7.700"/></clipPath></defs><g clip-path="url(#pc)"><rect width="15.400" height="6" fill="#a8c4dc"/><rect y="5" width="15.400" height="2.600" fill="#5b5a4a"/><rect y="6.200" width="15.400" height="1" fill="#8a3b30"/><rect y="7.600" width="15.400" height="8" fill="#8e8b80"/><rect y="11" width="15.400" height="5" fill="#7d7a70"/></g></svg>
<div style="left:793px;top:760.5px;width:6px;height:2.2px;background:#8a8a8a;border-radius:1.100px;"></div>
<svg style="left:828px;top:732px" width="23.500" height="24.500" viewBox="0 0 23.5 24.5"><path d="M6 6V3.500Q6 1.500 8 1.500H15.500Q17.500 1.500 17.500 3.500V6" fill="none" stroke="#3cb6f4" stroke-width="1.700"/><path d="M0 4.500H23.500V20.500Q23.500 24.300 19.500 24.300H4Q0 24.300 0 20.500Z" fill="#fbfbfb"/><rect x="7" y="10.200" width="3.700" height="3.700" fill="#f25022"/><rect x="12" y="10.200" width="3.700" height="3.700" fill="#7fba00"/><rect x="7" y="15.300" width="3.700" height="3.700" fill="#00a4ef"/><rect x="12" y="15.300" width="3.700" height="3.700" fill="#ffb900"/></svg>
<svg style="left:873px;top:734px" width="23" height="22.500" viewBox="0 0 23 22.5"><path d="M1 4.500L3.500 3.500L4 16.500L13 19.500L13.500 22L1.500 17.500Z" fill="#c4202c"/><path d="M3.500 3.500L6 4.500L6 15.500L13 18L13 19.500L4 16.500Z" fill="#e8505a"/><rect x="6.300" y="4" width="5" height="4.500" fill="#e0a030" transform="skewY(-8)"/><rect x="5" y="9.300" width="6.500" height="3.600" fill="#46b04a" transform="skewY(8)"/><rect x="5.500" y="12.500" width="5.500" height="3.600" fill="#2f62d8" transform="skewY(10)"/><path d="M11 15L14.500 13.500V20L11 19Z" fill="#28a8e0"/><path d="M12 5.500L17 8.500L14.500 11.500L11.500 9Z" fill="#3fae6a"/><path d="M14.500 11.500L18 9.500V20L14.500 21Z" fill="#b03cc8"/><path d="M14.500 1.500L19.500 3.500L18.500 6L13.800 3.500Z" fill="#c060d8"/><rect x="20.300" y="13.300" width="1.600" height="1.600" fill="#28c8f0"/></svg>
<svg style="left:915.9px;top:732.6px" width="24.500" height="22" viewBox="0 0 24.5 22"><path d="M0 2Q0 0 2 0H7.500Q8.500 0 9.300 .8L11 2.500H22.500Q24.500 2.500 24.500 4.500V8H0Z" fill="#e9a81c"/><path d="M0 5.500Q0 4.500 1 4.500H23.500Q24.500 4.500 24.500 5.500V20Q24.500 22 22.500 22H2Q0 22 0 20Z" fill="#fbd04e"/><path d="M4.800 17Q4.800 15 6.800 15H17.500Q19.500 15 19.500 17V22H4.800Z" fill="#1c86d4"/><rect x="8" y="17.800" width="8.500" height="1.500" rx=".7" fill="#1565b0"/></svg>
<div style="left:925.4px;top:760.5px;width:6px;height:2.2px;background:#8a8a8a;border-radius:1.100px;"></div>
<div style="left:952px;top:724px;width:40px;height:40px;background:#2e2d2c;box-sizing:border-box;border-radius:4px;border:1px solid #383736;"></div>
<svg style="left:960.6px;top:732.6px" width="22.500" height="22.800" viewBox="0 0 22.5 22.8"><rect x="11" y="3" width="11.300" height="16.500" fill="#fff" stroke="#1e7145" stroke-width="1"/><path d="M12 6H22M12 9H22M12 12H22M12 15H22M17.500 3V19.500" stroke="#1e7145" stroke-width="1.300"/><path d="M0 2.500L13 0V22.800L0 20.300Z" fill="#1e7145"/><path d="M3.500 7L5.300 7L6.700 9.900L8.200 6.700L10 6.600L7.700 11.300L10.100 16.200L8.200 16.100L6.600 12.800L5.200 15.900L3.400 15.800L5.700 11.300Z" fill="#fff"/></svg>
<div style="left:964.2px;top:760.2px;width:15.7px;height:2.5px;background:#4cb8f5;border-radius:1.250px;"></div>
<svg style="left:1110.500px;top:739.500px" width="11.500" height="7" viewBox="0 0 11.5 7"><path d="M.8 6.200L5.750 1.200L10.700 6.200" fill="none" stroke="#fff" stroke-width="1.500"/></svg>
<svg style="left:1139.500px;top:736.500px" width="16.500" height="13" viewBox="0 0 16.5 13"><path d="M.8 4.600A10.500 10.500 0 0 1 15.700 4.600" fill="none" stroke="#fff" stroke-width="1.300"/><path d="M3.200 7A7.200 7.200 0 0 1 13.300 7" fill="none" stroke="#fff" stroke-width="1.300"/><path d="M5.500 9.300A4 4 0 0 1 11 9.300" fill="none" stroke="#fff" stroke-width="1.300"/><circle cx="8.250" cy="11.500" r="1.200" fill="#fff"/></svg>
<svg style="left:1163.500px;top:736px" width="17" height="15" viewBox="0 0 17 15"><path d="M.7 5.200H3.500L7.300 1.500V13.500L3.500 9.800H.7Z" fill="none" stroke="#fff" stroke-width="1.200" stroke-linejoin="round"/><path d="M9.500 5A3.500 3.500 0 0 1 9.500 10" fill="none" stroke="#fff" stroke-width="1.100"/><path d="M11.500 3A6.300 6.300 0 0 1 11.500 12" fill="none" stroke="#8a8a8a" stroke-width="1.100"/><path d="M13.500 1.200A9 9 0 0 1 13.500 13.800" fill="none" stroke="#6a6a6a" stroke-width="1.100"/></svg>
<svg style="left:1187px;top:735px" width="18" height="15" viewBox="0 0 18 15"><rect x="2.500" y="4.700" width="12.500" height="8" rx="1.800" fill="none" stroke="#fff" stroke-width="1.200"/><path d="M15.500 7V10.500" stroke="#fff" stroke-width="1.600" stroke-linecap="round"/><rect x="4.300" y="6.500" width="6.500" height="4.400" rx=".6" fill="#fff"/><path d="M4.500 .5L1.200 5.800H3.800L2.500 10L6.500 4.200H3.800Z" fill="#fff" stroke="#1f1e1c" stroke-width=".7"/></svg>
<span class="t" style="left:1253.56px;top:730px;font-size:12px;line-height:12px;color:#fff;transform:scaleX(1.0268);">11.50</span>
<span class="t" style="left:1220.54px;top:746px;font-size:12px;line-height:12px;color:#fff;transform:scaleX(1.0460);">14/08/2024</span>
<svg style="left:1290px;top:735.500px" width="17" height="18" viewBox="0 0 17 18"><path d="M1 13.500C2.600 12 2.600 10 2.700 7.800C2.900 4.600 4.800 3 7.500 3C10.200 3 12.100 4.600 12.300 7.800C12.400 10 12.400 12 14 13.500Z" fill="#fff"/><path d="M5.600 15H9.400Q7.500 18 5.600 15Z" fill="#fff"/><text x="4.500" y="11" font-size="6.500" font-weight="700" fill="#1f1e1c" font-family="Liberation Sans, sans-serif">z</text><text x="10.800" y="6" font-size="7.500" font-weight="700" fill="#fff" stroke="#1f1e1c" stroke-width=".5" paint-order="stroke" font-family="Liberation Sans, sans-serif">z</text></svg>
<svg style="left:1322.500px;top:733.500px" width="24" height="23" viewBox="0 0 24 23"><defs><linearGradient id="c1" x1="0" y1="0" x2="1" y2="1"><stop offset="0" stop-color="#2f7fe8"/><stop offset="1" stop-color="#35c1f1"/></linearGradient><linearGradient id="c2" x1="0" y1="0" x2="0" y2="1"><stop offset="0" stop-color="#22b4f2"/><stop offset=".5" stop-color="#4fd07a"/><stop offset="1" stop-color="#f0d23a"/></linearGradient><linearGradient id="c3" x1="0" y1="0" x2="0" y2="1"><stop offset="0" stop-color="#b45ee8"/><stop offset=".6" stop-color="#f0609a"/><stop offset="1" stop-color="#f59a4a"/></linearGradient></defs><path d="M8.500 1.500Q9.200 0 11 0H15Q17 0 17.600 2L19 6.500H12.500L11 3Q10.500 1.500 8.500 1.500Z" fill="url(#c1)"/><path d="M3 6.500Q3.800 3.500 6.500 1.500H9Q11 1.500 11.600 3.500L8 15.500Q7.300 17.500 5.200 17.500H2.500Q.5 17.500 1 15Z" fill="url(#c2)"/><path d="M15 5.500H20Q23.500 5.500 22.800 9L21 15Q20 17.800 17.500 17.800H11.500Q14 17 14.600 15Z" fill="url(#c3)"/><path d="M11 7.500H15L13 14Q12.500 15.500 11 16H8Z" fill="#7a6ae0"/><rect x="6.500" y="14.500" width="17.500" height="8" rx="2" fill="#f4c20d"/><text x="8.300" y="21.200" font-size="7" font-weight="700" fill="#1f1e1c" font-family="Liberation Sans, sans-serif" textLength="14" lengthAdjust="spacingAndGlyphs">PRE</text></svg>
<svg style="left:93.300px;top:84px" width="7" height="4"><path d="M0 0H6.600L3.300 3.600Z" fill="#6a6a6a"/></svg>
<div style="left:121.3px;top:82px;width:1.5px;height:1.5px;background:#b0b0b0;"></div>
<div style="left:121.3px;top:86.3px;width:1.5px;height:1.5px;background:#b0b0b0;"></div>
<div style="left:121.3px;top:90.6px;width:1.5px;height:1.5px;background:#b0b0b0;"></div>
<svg style="left:150.500px;top:82.300px" width="11" height="9.600" viewBox="0 0 11 9.6"><path d="M.6 .4L10.400 9.200M10.400 .4L.6 9.200" stroke="#ababab" stroke-width="1.600"/></svg>
<svg style="left:185.500px;top:82px" width="13.500" height="10.500" viewBox="0 0 13.5 10.5"><path d="M.7 6L4.600 9.600L12.800 .8" fill="none" stroke="#ababab" stroke-width="1.900"/></svg>
<span class="t" style="left:222.85px;top:80px;font-size:12.5px;line-height:12.5px;color:#4a4a4a;font-weight:700;font-style:italic;font-family:Liberation Serif,serif;">f</span>
<span class="t" style="left:228.37px;top:84px;font-size:8.5px;line-height:8.5px;color:#4a4a4a;font-weight:700;font-style:italic;font-family:Liberation Serif,serif;">x</span>
<svg style="left:1348.500px;top:84px" width="8" height="5.500" viewBox="0 0 8 5.5"><path d="M.7 .8L4 4.200L7.300 .8" fill="none" stroke="#5a5a5a" stroke-width="1.500"/></svg>
</div>
</body></html>
